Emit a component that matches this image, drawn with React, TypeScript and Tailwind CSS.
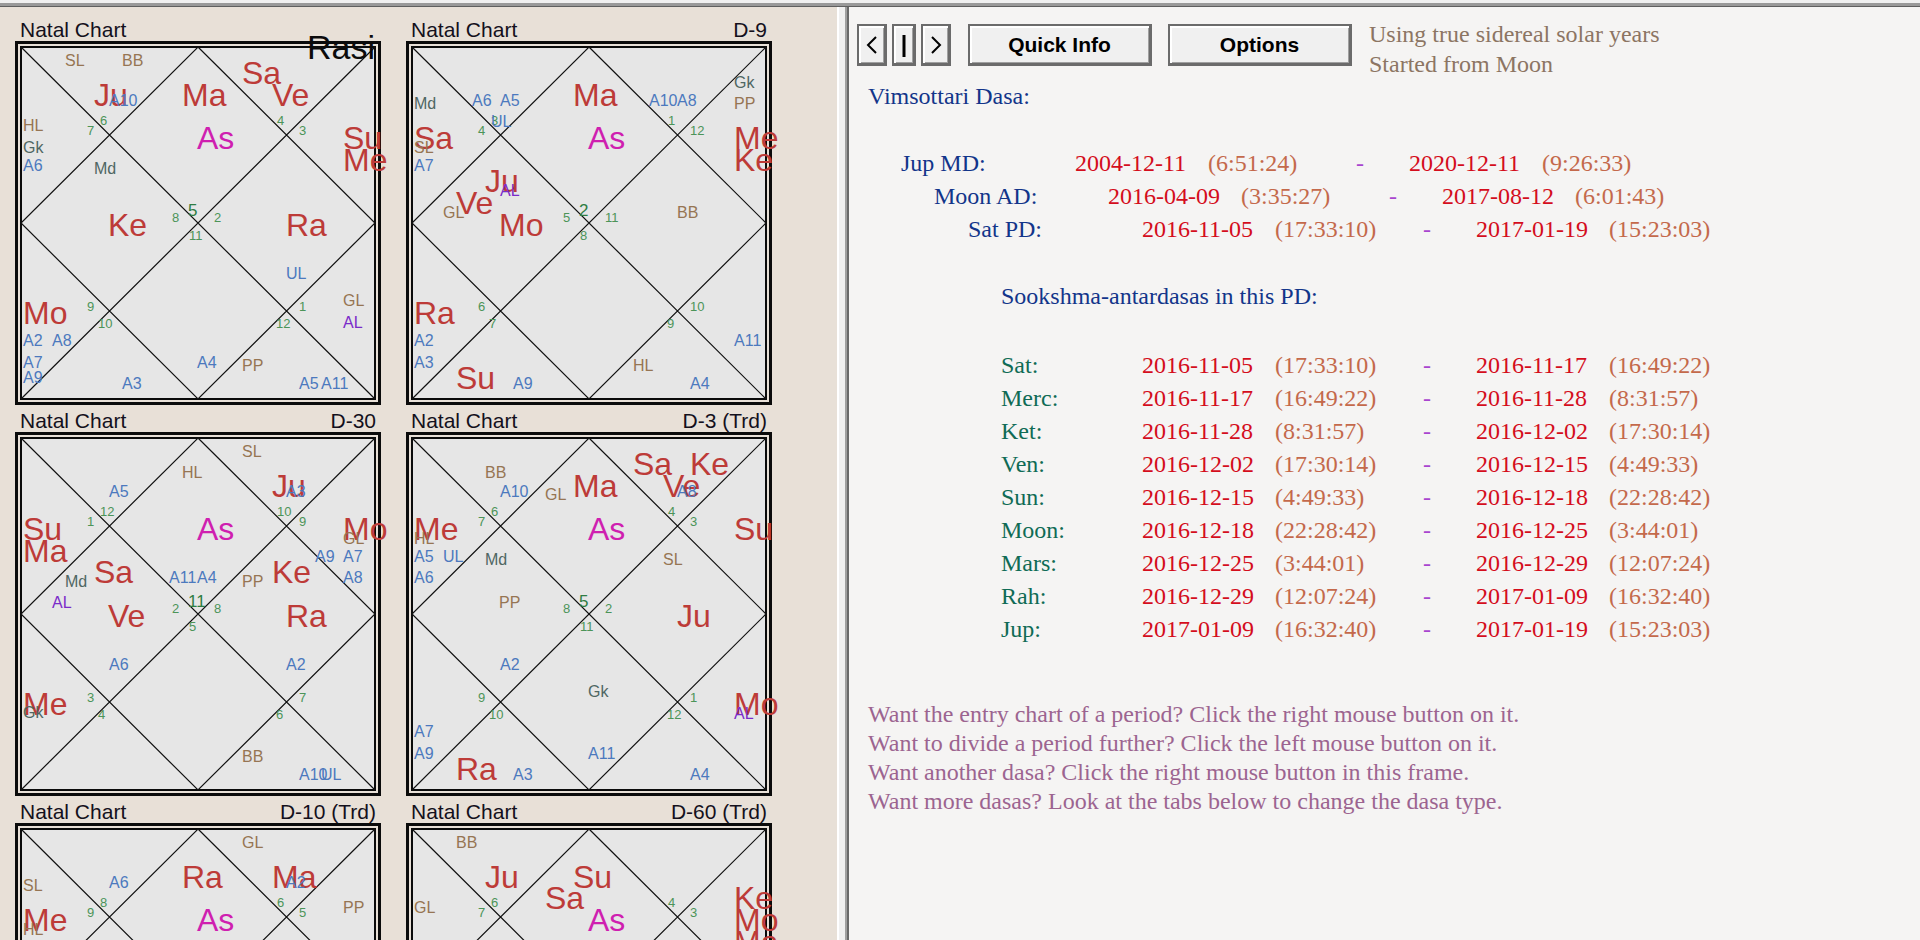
import type { ReactNode } from "react";

type Kind = "graha" | "lagna" | "special" | "upagraha" | "arudha" | "pada";
type Label = [text: string, kind: Kind, x: number, y: number];

type ChartData = {
  title: string;
  ascendant: number;
  labels: Label[];
};

type Period = {
  name: string;
  start: string;
  startTime: string;
  end: string;
  endTime: string;
};

const KIND_CLASSES: Record<Kind, string> = {
  graha: "fill-[#bd3b38] text-[32px]",
  lagna: "fill-[#cf1fb0] text-[32px]",
  special: "fill-[#967553] text-[16px]",
  upagraha: "fill-[#4f6663] text-[16px]",
  arudha: "fill-[#7a2bc9] text-[16px]",
  pada: "fill-[#4c79be] text-[16px]",
};

// Where the sign number of each house is written, first house first
const HOUSE_NUMBERS = [
  [173, 175],
  [85, 84],
  [72, 94],
  [157, 181],
  [72, 270],
  [83, 287],
  [174, 199],
  [261, 287],
  [284, 270],
  [199, 181],
  [284, 94],
  [262, 84],
];

const CHARTS: ChartData[] = [
  {
    title: "Rasi",
    ascendant: 5,
    labels: [
      ["SL", "special", 50, 25],
      ["BB", "special", 107, 25],
      ["Ju", "graha", 79, 65],
      ["A10", "pada", 94, 65],
      ["Ma", "graha", 167, 65],
      ["As", "lagna", 182, 108],
      ["Sa", "graha", 227, 43],
      ["Ve", "graha", 257, 65],
      ["Su", "graha", 328, 108],
      ["Me", "graha", 328, 130],
      ["HL", "special", 8, 90],
      ["Gk", "upagraha", 8, 112],
      ["A6", "pada", 8, 130],
      ["Md", "upagraha", 79, 133],
      ["Ke", "graha", 93, 195],
      ["Ra", "graha", 271, 195],
      ["UL", "pada", 271, 238],
      ["GL", "special", 328, 265],
      ["AL", "arudha", 328, 287],
      ["Mo", "graha", 8, 283],
      ["A2", "pada", 8, 305],
      ["A8", "pada", 37, 305],
      ["A7", "pada", 8, 327],
      ["A9", "pada", 8, 342],
      ["A3", "pada", 107, 348],
      ["A4", "pada", 182, 327],
      ["PP", "special", 227, 330],
      ["A5", "pada", 284, 348],
      ["A11", "pada", 306, 348],
    ],
  },
  {
    title: "D-9",
    ascendant: 2,
    labels: [
      ["Md", "upagraha", 8, 68],
      ["A6", "pada", 66, 65],
      ["A5", "pada", 94, 65],
      ["UL", "pada", 85, 86],
      ["Sa", "graha", 8, 108],
      ["SL", "special", 8, 112],
      ["A7", "pada", 8, 130],
      ["Ju", "graha", 79, 151],
      ["AL", "arudha", 94, 155],
      ["Ve", "graha", 50, 173],
      ["GL", "special", 37, 177],
      ["Mo", "graha", 93, 195],
      ["Ma", "graha", 167, 65],
      ["As", "lagna", 182, 108],
      ["A10", "pada", 243, 65],
      ["A8", "pada", 271, 65],
      ["Gk", "upagraha", 328, 47],
      ["PP", "special", 328, 68],
      ["Me", "graha", 328, 108],
      ["Ke", "graha", 328, 130],
      ["BB", "special", 271, 177],
      ["Ra", "graha", 8, 283],
      ["A2", "pada", 8, 305],
      ["A3", "pada", 8, 327],
      ["Su", "graha", 50, 348],
      ["A9", "pada", 107, 348],
      ["HL", "special", 227, 330],
      ["A4", "pada", 284, 348],
      ["A11", "pada", 328, 305],
    ],
  },
  {
    title: "D-30",
    ascendant: 11,
    labels: [
      ["SL", "special", 227, 25],
      ["HL", "special", 167, 46],
      ["A5", "pada", 94, 65],
      ["Ju", "graha", 257, 65],
      ["A3", "pada", 271, 65],
      ["Su", "graha", 8, 108],
      ["Ma", "graha", 8, 130],
      ["As", "lagna", 182, 108],
      ["Mo", "graha", 328, 108],
      ["GL", "special", 328, 112],
      ["A9", "pada", 300, 130],
      ["A7", "pada", 328, 130],
      ["A8", "pada", 328, 151],
      ["Md", "upagraha", 50, 155],
      ["Sa", "graha", 79, 151],
      ["AL", "arudha", 37, 176],
      ["Ve", "graha", 93, 195],
      ["A11", "pada", 154, 151],
      ["A4", "pada", 182, 151],
      ["PP", "special", 227, 155],
      ["Ke", "graha", 257, 151],
      ["Ra", "graha", 271, 195],
      ["A6", "pada", 94, 238],
      ["A2", "pada", 271, 238],
      ["Me", "graha", 8, 283],
      ["Gk", "upagraha", 8, 286],
      ["BB", "special", 227, 330],
      ["A10", "pada", 284, 348],
      ["UL", "pada", 306, 348],
    ],
  },
  {
    title: "D-3 (Trd)",
    ascendant: 5,
    labels: [
      ["BB", "special", 79, 46],
      ["A10", "pada", 94, 65],
      ["GL", "special", 139, 68],
      ["Ma", "graha", 167, 65],
      ["Sa", "graha", 227, 43],
      ["Ke", "graha", 284, 43],
      ["Ve", "graha", 257, 65],
      ["A8", "pada", 271, 65],
      ["Me", "graha", 8, 108],
      ["HL", "special", 8, 112],
      ["A5", "pada", 8, 130],
      ["UL", "pada", 37, 130],
      ["A6", "pada", 8, 151],
      ["As", "lagna", 182, 108],
      ["Su", "graha", 328, 108],
      ["Md", "upagraha", 79, 133],
      ["SL", "special", 257, 133],
      ["PP", "special", 93, 176],
      ["Ju", "graha", 271, 195],
      ["A2", "pada", 94, 238],
      ["Gk", "upagraha", 182, 265],
      ["A7", "pada", 8, 305],
      ["A9", "pada", 8, 327],
      ["Ra", "graha", 50, 348],
      ["A3", "pada", 107, 348],
      ["A11", "pada", 182, 327],
      ["A4", "pada", 284, 348],
      ["Mo", "graha", 328, 283],
      ["AL", "arudha", 328, 287],
    ],
  },
  {
    title: "D-10 (Trd)",
    ascendant: 7,
    labels: [
      ["GL", "special", 227, 25],
      ["Ra", "graha", 167, 65],
      ["Ma", "graha", 257, 65],
      ["A2", "pada", 271, 65],
      ["A6", "pada", 94, 65],
      ["SL", "special", 8, 68],
      ["Me", "graha", 8, 108],
      ["HL", "special", 8, 112],
      ["As", "lagna", 182, 108],
      ["PP", "special", 328, 90],
    ],
  },
  {
    title: "D-60 (Trd)",
    ascendant: 5,
    labels: [
      ["BB", "special", 50, 25],
      ["Ju", "graha", 79, 65],
      ["Su", "graha", 167, 65],
      ["Sa", "graha", 139, 86],
      ["As", "lagna", 182, 108],
      ["GL", "special", 8, 90],
      ["Ke", "graha", 328, 86],
      ["Mo", "graha", 328, 108],
      ["Ma", "graha", 328, 130],
    ],
  },
];

const RUNNING: (Period & { indent: string })[] = [
  { name: "Jup MD:", start: "2004-12-11", startTime: "(6:51:24)", end: "2020-12-11", endTime: "(9:26:33)", indent: "pl-[33px]" },
  { name: "Moon AD:", start: "2016-04-09", startTime: "(3:35:27)", end: "2017-08-12", endTime: "(6:01:43)", indent: "pl-[66px]" },
  { name: "Sat PD:", start: "2016-11-05", startTime: "(17:33:10)", end: "2017-01-19", endTime: "(15:23:03)", indent: "pl-[100px]" },
];

const SOOKSHMA: Period[] = [
  { name: "Sat:", start: "2016-11-05", startTime: "(17:33:10)", end: "2016-11-17", endTime: "(16:49:22)" },
  { name: "Merc:", start: "2016-11-17", startTime: "(16:49:22)", end: "2016-11-28", endTime: "(8:31:57)" },
  { name: "Ket:", start: "2016-11-28", startTime: "(8:31:57)", end: "2016-12-02", endTime: "(17:30:14)" },
  { name: "Ven:", start: "2016-12-02", startTime: "(17:30:14)", end: "2016-12-15", endTime: "(4:49:33)" },
  { name: "Sun:", start: "2016-12-15", startTime: "(4:49:33)", end: "2016-12-18", endTime: "(22:28:42)" },
  { name: "Moon:", start: "2016-12-18", startTime: "(22:28:42)", end: "2016-12-25", endTime: "(3:44:01)" },
  { name: "Mars:", start: "2016-12-25", startTime: "(3:44:01)", end: "2016-12-29", endTime: "(12:07:24)" },
  { name: "Rah:", start: "2016-12-29", startTime: "(12:07:24)", end: "2017-01-09", endTime: "(16:32:40)" },
  { name: "Jup:", start: "2017-01-09", startTime: "(16:32:40)", end: "2017-01-19", endTime: "(15:23:03)" },
];

function Chart({ title, ascendant, labels }: ChartData) {
  const isRasi = title === "Rasi";

  return (
    <figure className="w-[366px]">
      <figcaption className="flex h-[27px] justify-between px-[5px] pt-[4px] text-[21px] leading-[23px] text-[#14101c]">
        <span>Natal Chart</span>
        {!isRasi && <span>{title}</span>}
      </figcaption>
      <svg viewBox="0 0 366 364" className="block w-full overflow-visible" role="img" aria-label={`${title} chart`}>
        {/* Frame */}
        <rect x="1.5" y="1.5" width="363" height="361" fill="#e8e0d7" stroke="#0b0b0b" strokeWidth="3" />
        <rect x="6" y="6" width="354" height="352" fill="#e6e6e6" stroke="#0b0b0b" strokeWidth="2" />
        {/* Houses */}
        <path
          d="M6 6L360 358M360 6L6 358M183 6L360 182L183 358L6 182Z"
          fill="none"
          stroke="#111"
          strokeWidth="1.2"
        />
        {HOUSE_NUMBERS.map(([x, y], house) => (
          <text
            key={house}
            x={x}
            y={y}
            className={house === 0 ? "fill-[#2f7d43] text-[17px]" : "fill-[#4c9458] text-[13px]"}
          >
            {((ascendant + house - 1) % 12) + 1}
          </text>
        ))}
        {labels.map(([text, kind, x, y], index) => (
          <text key={index} x={x} y={y} className={KIND_CLASSES[kind]}>
            {text}
          </text>
        ))}
        {isRasi && (
          <text x="360" y="18" textAnchor="end" className="fill-[#0b0b0b] text-[34px]">
            {title}
          </text>
        )}
      </svg>
    </figure>
  );
}

function PushButton({ label, width, children }: { label: string; width: string; children?: ReactNode }) {
  return (
    <button
      type="button"
      aria-label={label}
      className={`${width} flex h-[42px] items-center justify-center border-t-2 border-r-3 border-b-3 border-l-2 border-[#6b6b6b] bg-[#f0f0f0] text-[21px] leading-none font-bold text-black shadow-[inset_2px_2px_0_#fff,inset_-1px_-1px_0_#a0a0a0]`}
    >
      {children ?? label}
    </button>
  );
}

function StepIcon({ d, strokeWidth }: { d: string; strokeWidth: number }) {
  return (
    <svg width="12" height="24" viewBox="0 0 12 24" fill="none" stroke="#000" strokeWidth={strokeWidth}>
      <path d={d} />
    </svg>
  );
}

function PeriodCells({ period, nameColor }: { period: Period; nameColor: string }) {
  return (
    <>
      <th scope="row" className={`${nameColor} text-left font-normal`}>
        {period.name}
      </th>
      <td className="text-[#d40d1c]">{period.start}</td>
      <td className="text-[#c4694b]">{period.startTime}</td>
      <td className="text-[#a845cf]">-</td>
      <td className="text-[#d40d1c]">{period.end}</td>
      <td className="text-[#c4694b]">{period.endTime}</td>
    </>
  );
}

export default function App() {
  return (
    <div className="flex h-screen flex-col overflow-hidden bg-[#f0f0f0] pt-[3px] font-['Liberation_Sans',sans-serif]">
      <div className="h-[4px] shrink-0 border-b border-[#5f5f5f] bg-[#999]" />

      <div className="flex min-h-0 flex-1">
        {/* Charts */}
        <section className="w-[837px] shrink-0 overflow-hidden bg-[#e8e0d7] pt-[7px] pl-[15px]">
          <div className="grid grid-cols-[366px_366px] gap-x-[25px]">
            {CHARTS.map((chart) => (
              <Chart key={chart.title} {...chart} />
            ))}
          </div>
        </section>

        {/* Splitter */}
        <div className="w-[10px] shrink-0 border-r-2 border-l-2 border-r-[#a0a0a0] border-l-white bg-[#f0f0f0]" />

        {/* Dasas */}
        <main className="min-w-0 flex-1 overflow-hidden border-l-2 border-[#696969] bg-[#f5f4f3] pl-[8px] font-['Liberation_Serif',serif] text-[24px] leading-[33px]">
          <div className="flex items-start pt-[12px]">
            <div className="flex gap-[5px] pt-[5px] font-['Liberation_Sans',sans-serif]">
              <PushButton label="Previous" width="w-[30px]">
                <StepIcon d="M10 4L2 12L10 20" strokeWidth={2} />
              </PushButton>
              <PushButton label="Current" width="w-[24px]">
                <StepIcon d="M6 2V24" strokeWidth={3} />
              </PushButton>
              <PushButton label="Next" width="w-[30px]">
                <StepIcon d="M2 4L10 12L2 20" strokeWidth={2} />
              </PushButton>
            </div>
            <div className="ml-[17px] flex gap-[16px] pt-[5px] font-['Liberation_Sans',sans-serif]">
              <PushButton label="Quick Info" width="w-[184px]" />
              <PushButton label="Options" width="w-[184px]" />
            </div>
            <p className="ml-[17px] leading-[30px] text-[#8c7563]">
              Using true sidereal solar years
              <br />
              Started from Moon
            </p>
          </div>

          <div className="pt-[1px] pl-[11px]">
            <h1 className="text-[#12358a]">Vimsottari Dasa:</h1>

            <table className="mt-[34px] block">
              <tbody className="block">
                {RUNNING.map((period) => (
                  <tr
                    key={period.name}
                    className={`${period.indent} grid grid-cols-[174px_133px_148px_53px_133px_auto]`}
                  >
                    <PeriodCells period={period} nameColor="text-[#12358a]" />
                  </tr>
                ))}
              </tbody>
            </table>

            <h2 className="mt-[34px] pl-[133px] text-[#12358a]">Sookshma-antardasas in this PD:</h2>

            <table className="mt-[36px] block">
              <tbody className="block">
                {SOOKSHMA.map((period) => (
                  <tr key={period.name} className="grid grid-cols-[141px_133px_148px_53px_133px_auto] pl-[133px]">
                    <PeriodCells period={period} nameColor="text-[#0f6b55]" />
                  </tr>
                ))}
              </tbody>
            </table>

            <div className="mt-[54px] leading-[29px] text-[#9c6490]">
              <p>Want the entry chart of a period? Click the right mouse button on it.</p>
              <p>Want to divide a period further? Click the left mouse button on it.</p>
              <p>Want another dasa? Click the right mouse button in this frame.</p>
              <p>Want more dasas? Look at the tabs below to change the dasa type.</p>
            </div>
          </div>
        </main>
      </div>
    </div>
  );
}
